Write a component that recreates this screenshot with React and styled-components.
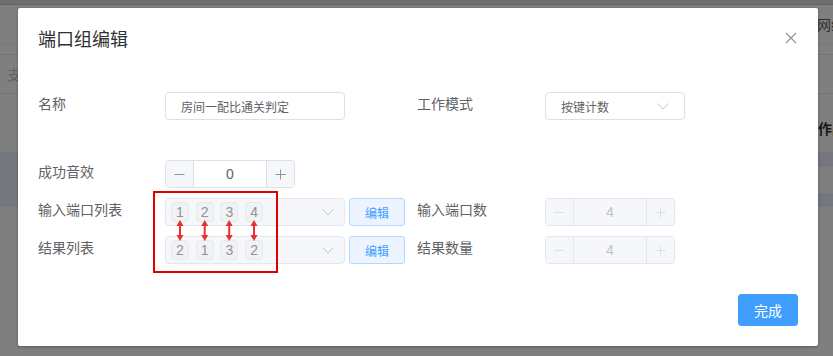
import React from 'react';
import styled, { createGlobalStyle } from 'styled-components';

const GlobalStyle = createGlobalStyle`
    html, body {
        margin: 0;
        padding: 0;
        background: #fff;
    }
    * {
        box-sizing: border-box;
    }
    body {
        font-family: "Liberation Sans", "Noto Sans CJK SC", sans-serif;
    }
`

const Page = styled.div`
    position: relative;
    width: 833px;
    height: 356px;
    overflow: hidden;
    background: #fff;
`

const TopStrip = styled.div`
    height: 5px;
    background: #dcdcdc;
    border-bottom: 1px solid #c8c8c8;
`

const NavRow = styled.div`
    height: 39px;
    display: flex;
    align-items: center;
    padding-left: 817px;
    font-size: 14px;
    color: #606266;
    border-bottom: 1px solid #ebeef5;
    white-space: nowrap;
`

const SearchRow = styled.div`
    margin-top: 10px;
    height: 40px;
    display: flex;
    align-items: center;
    padding-left: 7px;
    font-size: 14px;
    color: #c0c4cc;
    border-top: 1px solid #e4e7ed;
    border-bottom: 1px solid #e4e7ed;
`

const TableHead = styled.div`
    height: 58px;
    display: flex;
    align-items: center;
    padding-left: 818px;
    padding-top: 10px;
    font-size: 14px;
    font-weight: bold;
    color: #303133;
    white-space: nowrap;
`

const CurrentRow = styled.div`
    height: 55px;
    background: #e8effa;
    padding: 15px 0 14px 818px;
`

const RowCell = styled.div`
    height: 26px;
    background: #fff;
`

const Mask = styled.div`
    position: absolute;
    inset: 0;
    background: rgba(0, 0, 0, 0.5);
    padding: 8px 15px 10px 18px;
`

const Dialog = styled.div`
    position: relative;
    width: 800px;
    height: 338px;
    background: #fff;
    border-radius: 2px;
    box-shadow: 0 1px 3px rgba(0, 0, 0, 0.3);
    display: flex;
    flex-direction: column;
`

const Header = styled.div`
    padding: 20px 20px 10px;
`

const Title = styled.span`
    display: block;
    font-size: 18px;
    line-height: 24px;
    color: #303133;
`

const CloseBtn = styled.button`
    position: absolute;
    top: 24px;
    right: 21px;
    width: 12px;
    height: 12px;
    padding: 0;
    border: none;
    background: transparent;
    display: flex;
`

const Body = styled.div`
    padding: 30px 20px 0;
`

const Row = styled.div`
    display: flex;
    height: 28px;
    margin-top: ${p => p.$gap || 0}px;
`

const Col = styled.div`
    display: flex;
    width: ${p => p.$width ? `${p.$width}px` : 'auto'};
`

const Label = styled.div`
    width: ${p => p.$width}px;
    line-height: 24px;
    font-size: 14px;
    color: #606266;
    white-space: nowrap;
`

const TextInput = styled.div`
    width: ${p => p.$width}px;
    height: 28px;
    border: 1px solid #dcdfe6;
    border-radius: 4px;
    padding: 0 15px;
    display: flex;
    align-items: center;
    justify-content: space-between;
    font-size: 12px;
    color: #606266;
    background: ${p => p.$disabled ? '#f5f7fa' : '#fff'};
    border-color: ${p => p.$disabled ? '#e4e7ed' : '#dcdfe6'};
`

const TagBox = styled(TextInput)`
    padding: 0 10px 0 5px;
`

const Tags = styled.div`
    display: flex;
`

const Tag = styled.span`
    width: 18px;
    height: 20px;
    margin-right: 6.7px;
    border: 1px solid #e9e9eb;
    border-radius: 4px;
    background: #f0f2f5;
    color: #909399;
    font-size: 14px;
    display: flex;
    align-items: center;
    justify-content: center;
`

const EditBtn = styled.button`
    margin-left: 4px;
    width: 56px;
    height: 28px;
    border: 1px solid #b3d8ff;
    border-radius: 3px;
    background: #ecf5ff;
    color: #409eff;
    font-family: inherit;
    font-size: 12px;
    padding: 0;
`

const Stepper = styled.div`
    width: 130px;
    height: 28px;
    display: flex;
    border: 1px solid ${p => p.$disabled ? '#e4e7ed' : '#dcdfe6'};
    border-radius: 4px;
    overflow: hidden;
    background: ${p => p.$disabled ? '#f5f7fa' : '#fff'};
`

const StepBtn = styled.span`
    width: 28px;
    display: flex;
    align-items: center;
    justify-content: center;
    background: #f5f7fa;
    border-left: ${p => p.$side === 'right' ? `1px solid ${p.$disabled ? '#e4e7ed' : '#dcdfe6'}` : 'none'};
    border-right: ${p => p.$side === 'left' ? `1px solid ${p.$disabled ? '#e4e7ed' : '#dcdfe6'}` : 'none'};
`

const StepValue = styled.span`
    flex: 1;
    display: flex;
    align-items: center;
    justify-content: center;
    font-size: 14px;
    color: ${p => p.$disabled ? '#c0c4cc' : '#606266'};
`

const Mark = styled.div`
    position: absolute;
    left: 135px;
    top: 183px;
    width: 125px;
    height: 82px;
    border: 2px solid #e10000;
`

const MarkArrows = styled.svg`
    position: absolute;
    left: -2px;
    top: -2px;
`

const Footer = styled.div`
    margin-top: auto;
    padding: 10px 20px 20px;
    display: flex;
    justify-content: flex-end;
`

const PrimaryBtn = styled.button`
    width: 60px;
    height: 32px;
    border: 1px solid #409eff;
    border-radius: 3px;
    background: #409eff;
    color: #fff;
    font-family: inherit;
    font-size: 14px;
    padding: 0;
`

function Chevron() {
    return (
        <svg width="12" height="7" viewBox="0 0 12 7">
            <path d="M0.5 0.5 L6 6 L11.5 0.5" fill="none" stroke="#c0c4cc" strokeWidth="1" />
        </svg>
    )
}

function Minus({ color }) {
    return (
        <svg width="11" height="11" viewBox="0 0 11 11">
            <path d="M0.5 5.5 H10.5" stroke={color} strokeWidth="1" />
        </svg>
    )
}

function Plus({ color }) {
    return (
        <svg width="11" height="11" viewBox="0 0 11 11">
            <path d="M0.5 5.5 H10.5 M5.5 0.5 V10.5" stroke={color} strokeWidth="1" />
        </svg>
    )
}

function NumberBox({ value, disabled }) {
    const c = disabled ? '#dcdfe6' : '#8f9298'
    return (
        <Stepper $disabled={disabled}>
            <StepBtn $side="left" $disabled={disabled}><Minus color={c} /></StepBtn>
            <StepValue $disabled={disabled}>{value}</StepValue>
            <StepBtn $side="right" $disabled={disabled}><Plus color={c} /></StepBtn>
        </Stepper>
    )
}

function TagSelect({ items }) {
    return (
        <TagBox $width={180} $disabled>
            <Tags>
                {items.map((t, i) => <Tag key={i}>{t}</Tag>)}
            </Tags>
            <Chevron />
        </TagBox>
    )
}

const arrowX = [27, 51.7, 76.2, 101]

function App() {
    return (
        <>
            <GlobalStyle />
            <Page>
                <TopStrip />
                <NavRow>网络</NavRow>
                <SearchRow>支付</SearchRow>
                <TableHead>作品</TableHead>
                <CurrentRow><RowCell /></CurrentRow>

                <Mask>
                    <Dialog>
                        <Header>
                            <Title>端口组编辑</Title>
                        </Header>
                        <CloseBtn aria-label="close">
                            <svg width="12" height="12" viewBox="0 0 12 12">
                                <path d="M1 1 L11 11 M11 1 L1 11" stroke="#909399" strokeWidth="1.2" />
                            </svg>
                        </CloseBtn>

                        <Body>
                            <Row>
                                <Col $width={379}>
                                    <Label $width={127}>名称</Label>
                                    <TextInput $width={180}>房间一配比通关判定</TextInput>
                                </Col>
                                <Col>
                                    <Label $width={128}>工作模式</Label>
                                    <TextInput $width={140}>
                                        按键计数
                                        <Chevron />
                                    </TextInput>
                                </Col>
                            </Row>
                            <Row $gap={40}>
                                <Col $width={379}>
                                    <Label $width={127}>成功音效</Label>
                                    <NumberBox value="0" />
                                </Col>
                            </Row>
                            <Row $gap={10}>
                                <Col $width={379}>
                                    <Label $width={127}>输入端口列表</Label>
                                    <TagSelect items={['1', '2', '3', '4']} />
                                    <EditBtn>编辑</EditBtn>
                                </Col>
                                <Col>
                                    <Label $width={128}>输入端口数</Label>
                                    <NumberBox value="4" disabled />
                                </Col>
                            </Row>
                            <Row $gap={10}>
                                <Col $width={379}>
                                    <Label $width={127}>结果列表</Label>
                                    <TagSelect items={['2', '1', '3', '2']} />
                                    <EditBtn>编辑</EditBtn>
                                </Col>
                                <Col>
                                    <Label $width={128}>结果数量</Label>
                                    <NumberBox value="4" disabled />
                                </Col>
                            </Row>
                        </Body>

                        <Mark>
                            <MarkArrows width="125" height="82" viewBox="0 0 125 82">
                                {arrowX.map(x => (
                                    <g key={x} fill="#e53333">
                                        <rect x={x - 1} y={33} width="2" height="14" />
                                        <path d={`M${x} 29 L${x + 3.5} 35 L${x - 3.5} 35 Z`} />
                                        <path d={`M${x} 50 L${x + 3.5} 44 L${x - 3.5} 44 Z`} />
                                    </g>
                                ))}
                            </MarkArrows>
                        </Mark>

                        <Footer>
                            <PrimaryBtn>完成</PrimaryBtn>
                        </Footer>
                    </Dialog>
                </Mask>
            </Page>
        </>
    )
}

export default App;
